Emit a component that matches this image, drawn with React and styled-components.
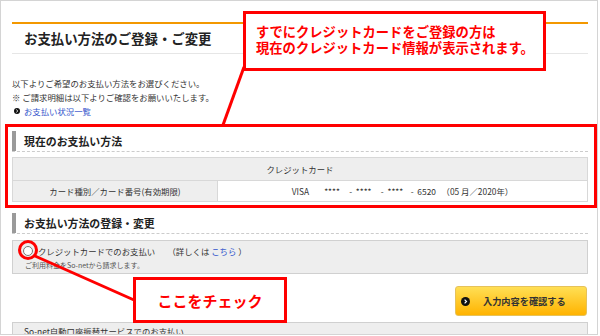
import React from "react";
import styled, { createGlobalStyle } from "styled-components";

const RED = "#f00";

const Global = createGlobalStyle`
  body {
    margin: 0;
    background: #fff;
    font-family: "Noto Sans CJK JP", "Noto Sans", sans-serif;
    color: #333;
  }
`;

// outer frame of the screenshot
const Frame = styled.div`
  position: relative;
  box-sizing: border-box;
  width: 598px;
  height: 335px;
  border: 1px solid #d4d4d4;
  padding: 21px 9px 0 11px;
  overflow: hidden;
  background: #fff;
`;

const PageTitle = styled.h1`
  margin: 0;
  border-top: 2px solid #f39800;
  border-bottom: 1px solid #e6e6e6;
  height: 29px;
  line-height: 29px;
  padding-left: 12px;
  font-size: 13.4px;
  font-weight: 700;
  color: #222;
`;

const Intro = styled.div`
  margin-top: 22px;
  font-size: 8.4px;
  line-height: 14px;
  color: #333;
`;

const LinkRow = styled.a`
  display: flex;
  align-items: center;
  gap: 4px;
  padding-left: 2px;
  color: #3355cc;
  text-decoration: none;
`;

const SectionHead = styled.div`
  margin-top: ${(p) => p.$top}px;
  border-bottom: 1px dashed #ccc;
`;

const SectionTitle = styled.h2`
  margin: 0;
  height: 20px;
  line-height: 20px;
  border-left: 4px solid #9a9a9a;
  padding-left: 8px;
  font-size: 10.9px;
  font-weight: 700;
  color: #222;
`;

const Table = styled.table`
  margin-top: 5px;
  width: 100%;
  border-collapse: collapse;
  font-size: 8.4px;
  color: #333;
`;

const Cell = styled.td`
  border: 1px solid #d8d8d8;
  background: ${(p) => (p.$gray ? "#eee" : "#fff")};
  text-align: center;
  height: ${(p) => p.$h}px;
  padding: 0;
  white-space: pre;
`;

const OptionBox = styled.div`
  margin-top: 6px;
  border: 1px solid #d0d0d0;
  background: #eee;
  padding: 2px 0 2px 10px;
`;

const OptionRow = styled.label`
  display: flex;
  align-items: center;
  height: 16px;
  font-size: 8.4px;
  color: #333;
  white-space: pre;
`;

const Radio = styled.span`
  box-sizing: border-box;
  width: 10px;
  height: 10px;
  border-radius: 50%;
  border: 1px solid #777;
  background: #fff;
  margin-right: 5px;
`;

const Blue = styled.span`
  color: #3355cc;
`;

const Note = styled.div`
  margin-left: 2px;
  font-size: 7px;
  line-height: 12px;
  color: #555;
`;

const ButtonRow = styled.div`
  display: flex;
  justify-content: flex-end;
  margin-top: 12px;
  padding-right: 1px;
`;

const ConfirmButton = styled.button`
  box-sizing: border-box;
  width: 132px;
  height: 30px;
  display: flex;
  align-items: center;
  padding: 0 0 0 5px;
  border: 1px solid #e6c25a;
  border-radius: 3px;
  background: linear-gradient(#ffdf55, #ffb300);
  font-family: inherit;
  font-size: 9.2px;
  font-weight: 700;
  color: #333;
  gap: 13px;
`;

const BottomBox = styled.div`
  margin-top: 6px;
  height: 30px;
  border: 1px solid #d0d0d0;
  background: #eee;
  padding-left: 11px;
  font-size: 8.4px;
  line-height: 17px;
  color: #333;
`;

// annotation overlays
const Callout = styled.div`
  position: absolute;
  box-sizing: border-box;
  left: ${(p) => p.$x}px;
  top: ${(p) => p.$y}px;
  width: ${(p) => p.$w}px;
  height: ${(p) => p.$h}px;
  border: 3px solid ${RED};
  background: #fff;
  color: ${RED};
  font-weight: 700;
`;

const CalloutText = styled.div`
  padding: 10px 0 0 10px;
  font-size: 13.3px;
  line-height: 16px;
  white-space: nowrap;
`;

const CheckText = styled.div`
  height: 100%;
  display: flex;
  align-items: center;
  justify-content: center;
  font-size: 15px;
`;

const HighlightBox = styled.div`
  position: absolute;
  box-sizing: border-box;
  left: 4px;
  top: 123px;
  width: 592px;
  height: 84px;
  border: 3px solid ${RED};
`;

const Lines = styled.svg`
  position: absolute;
  left: -1px;
  top: -1px;
  pointer-events: none;
`;

const Bullet = () => (
  <svg width="6" height="6" viewBox="0 0 6 6">
    <circle cx="3" cy="3" r="3" fill="#111" />
    <path d="M2.3 1.6 L3.8 3 L2.3 4.4" stroke="#fff" strokeWidth="0.9" fill="none" />
  </svg>
);

const ButtonIcon = () => (
  <svg width="9" height="9" viewBox="0 0 9 9">
    <circle cx="4.5" cy="4.5" r="4.5" fill="#111" />
    <path d="M3.6 2.6 L5.5 4.5 L3.6 6.4" stroke="#fff" strokeWidth="1.2" fill="none" />
  </svg>
);

export default function App() {
  return (
    <>
      <Global />
      <Frame>
        <PageTitle>お支払い方法のご登録・ご変更</PageTitle>

        <Intro>
          <div>以下よりご希望のお支払い方法をお選びください。</div>
          <div>※ ご請求明細は以下よりご確認をお願いいたします。</div>
          <LinkRow href="#">
            <Bullet />
            お支払い状況一覧
          </LinkRow>
        </Intro>

        <SectionHead $top={13}>
          <SectionTitle>現在のお支払い方法</SectionTitle>
        </SectionHead>
        <Table>
          <tbody>
            <tr>
              <Cell $gray $h={22} colSpan={2}>
                クレジットカード
              </Cell>
            </tr>
            <tr>
              <Cell $gray $h={20} style={{ width: 204 }}>
                カード種別／カード番号(有効期限)
              </Cell>
              <Cell $h={20}>
                {"VISA        ****     -  ****     -  ****    -  6520   （05 月／2020年）"}
              </Cell>
            </tr>
          </tbody>
        </Table>

        <SectionHead $top={11}>
          <SectionTitle>お支払い方法の登録・変更</SectionTitle>
        </SectionHead>
        <OptionBox>
          <OptionRow>
            <Radio />
            {"クレジットカードでのお支払い　  （詳しくは "}
            <Blue>こちら</Blue>
            {" ）"}
          </OptionRow>
          <Note>ご利用料金をSo-netから請求します。</Note>
        </OptionBox>

        <ButtonRow>
          <ConfirmButton>
            <ButtonIcon />
            入力内容を確認する
          </ConfirmButton>
        </ButtonRow>

        <BottomBox>So-net自動口座振替サービスでのお支払い</BottomBox>

        <HighlightBox />
        <Lines width="600" height="336">
          <line x1="244" y1="67" x2="223" y2="125" stroke={RED} strokeWidth="3" />
          <circle cx="28" cy="250" r="8.5" fill="none" stroke={RED} strokeWidth="3" />
          <line x1="35" y1="256" x2="134" y2="300" stroke={RED} strokeWidth="3" />
        </Lines>

        <Callout $x={242} $y={10} $w={303} $h={60}>
          <CalloutText>
            すでにクレジットカードをご登録の方は
            <br />
            現在のクレジットカード情報が表示されます。
          </CalloutText>
        </Callout>
        <Callout $x={132} $y={276} $w={154} $h={46}>
          <CheckText>ここをチェック</CheckText>
        </Callout>
      </Frame>
    </>
  );
}
